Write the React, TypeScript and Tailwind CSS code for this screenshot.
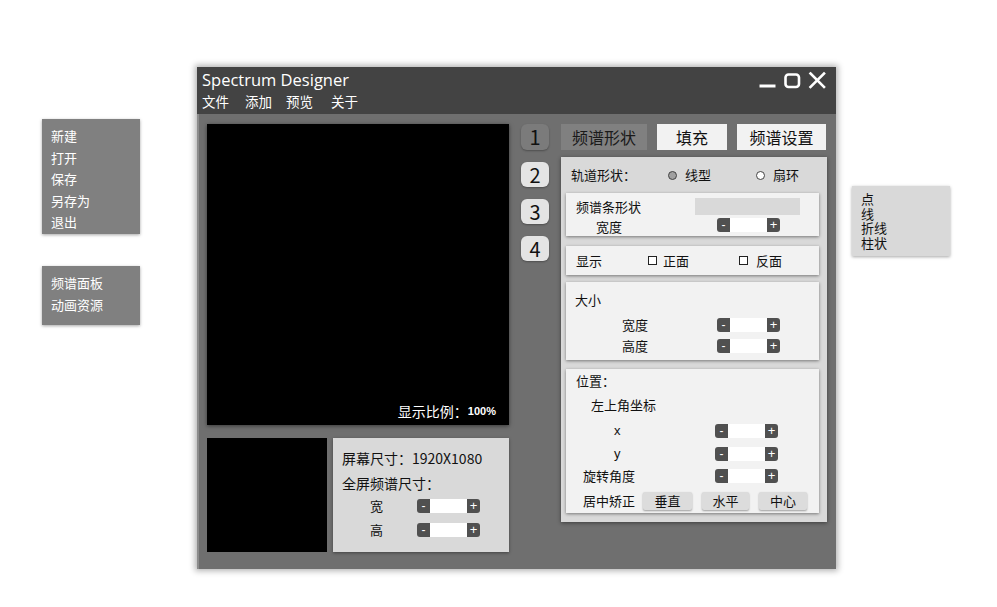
import React from "react";

const Spinner = () => (
  <div className="flex h-[14px] w-[63px]">
    <div className="flex w-[13px] items-center justify-center rounded-l-[3px] bg-[#505050] font-['Liberation_Sans',sans-serif] text-[12px] leading-[14px] text-white">-</div>
    <div className="flex-1 bg-white" />
    <div className="flex w-[13px] items-center justify-center rounded-r-[3px] bg-[#505050] font-['Liberation_Sans',sans-serif] text-[13px] leading-[14px] text-white">+</div>
  </div>
);

const Radio = ({ filled }: { filled?: boolean }) => (
  <span className={`inline-block h-[9px] w-[9px] rounded-full border-[1.5px] border-[#444] ${filled ? "bg-[#a0a0a0]" : "bg-white"}`} />
);

const Check = () => <span className="inline-block h-[9px] w-[9px] border border-[#222] bg-white" />;

const Section = ({ className, children }: { className: string; children?: React.ReactNode }) => (
  <div className={`ml-[5px] w-[253px] bg-[#f2f2f2] shadow-[0_1px_3px_rgba(0,0,0,0.45)] ${className}`}>{children}</div>
);

const SmallBtn = ({ w, label }: { w: string; label: string }) => (
  <div className={`flex h-[18px] items-center justify-center rounded-[2px] bg-[#dcdcdc] text-[13px] text-[#111] shadow-[0_1px_2px_rgba(0,0,0,0.35)] ${w}`}>{label}</div>
);

export default function App() {
  return (
    <div className="relative h-[607px] w-[997px] overflow-hidden bg-white font-['Noto_Sans_CJK_SC','Noto_Sans',sans-serif]">
      {/* left file menu */}
      <div className="absolute left-[42px] top-[119px] flex h-[115px] w-[98px] flex-col bg-[#808080] pl-[9px] pt-[6px] text-[13px] leading-[21.5px] text-white shadow-[0_1px_3px_rgba(0,0,0,0.35)]">
        <div>新建</div>
        <div>打开</div>
        <div>保存</div>
        <div>另存为</div>
        <div>退出</div>
      </div>
      <div className="absolute left-[42px] top-[266px] flex h-[59px] w-[98px] flex-col bg-[#808080] pl-[9px] pt-[6px] text-[13px] leading-[22px] text-white shadow-[0_1px_3px_rgba(0,0,0,0.35)]">
        <div>频谱面板</div>
        <div>动画资源</div>
      </div>

      {/* right shape menu */}
      <div className="absolute left-[852px] top-[186px] flex h-[70px] w-[98px] flex-col bg-[#d9d9d9] pl-[9px] pt-[6px] text-[13px] leading-[14.5px] text-[#111] shadow-[0_1px_3px_rgba(0,0,0,0.35)]">
        <div>点</div>
        <div>线</div>
        <div>折线</div>
        <div>柱状</div>
      </div>

      {/* main window */}
      <div className="absolute left-[197px] top-[67px] flex h-[502px] w-[639px] flex-col shadow-[0_0_6px_2px_rgba(0,0,0,0.3)]">
        <div className="flex h-[47px] flex-col bg-[#434343] pl-[5px] pr-[8px] text-white">
          <div className="flex items-start justify-between pt-[3px]">
            <div className="font-['Open_Sans','Noto_Sans',sans-serif] text-[16.5px] leading-[20px]">Spectrum Designer</div>
            <svg width="70" height="20" viewBox="0 0 70 20" fill="none" stroke="white" strokeLinecap="square">
              <line x1="3" y1="16" x2="16" y2="16" strokeWidth="3" />
              <rect x="27.5" y="4.5" width="13.5" height="12.5" rx="3" strokeWidth="2.6" />
              <line x1="52.5" y1="3.5" x2="66" y2="17" strokeWidth="2.6" />
              <line x1="66" y1="3.5" x2="52.5" y2="17" strokeWidth="2.6" />
            </svg>
          </div>
          <div className="mt-[3px] flex text-[13.5px] leading-[16px]">
            <span>文件</span>
            <span className="ml-[16px]">添加</span>
            <span className="ml-[14px]">预览</span>
            <span className="ml-[18px]">关于</span>
          </div>
        </div>

        <div className="flex flex-1 border-l-2 border-[#8c8c8c] bg-[#6f6f6f] pl-[8px] pt-[10px]">
          {/* left column */}
          <div className="flex w-[302px] flex-col">
            <div className="flex h-[301px] flex-col items-end justify-end bg-black pb-[5px] pr-[13px] shadow-[0_1px_4px_rgba(0,0,0,0.5)]">
              <div className="flex items-center text-white">
                <span className="text-[14px] leading-[18px]">显示比例：</span>
                <span className="text-[11px] font-bold leading-[18px] font-['Liberation_Sans',sans-serif]">100%</span>
              </div>
            </div>
            <div className="mt-[13px] flex gap-[6px]">
              <div className="h-[114px] w-[120px] bg-black" />
              <div className="flex h-[114px] w-[176px] flex-col bg-[#d9d9d9] pl-[9px] pt-[10px] text-[#111] shadow-[0_1px_3px_rgba(0,0,0,0.4)]">
                <div className="text-[14px] leading-[20px]">屏幕尺寸：1920X1080</div>
                <div className="mt-[5px] text-[14px] leading-[20px]">全屏频谱尺寸：</div>
                <div className="mt-[5px] flex items-center pl-[28px]">
                  <span className="w-[47px] text-[13px] leading-[16px]">宽</span>
                  <Spinner />
                </div>
                <div className="mt-[8px] flex items-center pl-[28px]">
                  <span className="w-[47px] text-[13px] leading-[16px]">高</span>
                  <Spinner />
                </div>
              </div>
            </div>
          </div>

          {/* step numbers */}
          <div className="ml-[12px] flex w-[28px] flex-col gap-[12px]">
            <div className="flex h-[26px] items-center justify-center rounded-[6px] bg-[#7b7b7b] text-[20px] leading-none text-[#111] shadow-[0_1px_2px_rgba(0,0,0,0.3)]">1</div>
            <div className="flex h-[25px] items-center justify-center rounded-[6px] bg-[#e4e4e4] text-[20px] leading-none text-[#111] shadow-[0_1px_2px_rgba(0,0,0,0.3)]">2</div>
            <div className="flex h-[25px] items-center justify-center rounded-[6px] bg-[#e4e4e4] text-[20px] leading-none text-[#111] shadow-[0_1px_2px_rgba(0,0,0,0.3)]">3</div>
            <div className="flex h-[25px] items-center justify-center rounded-[6px] bg-[#e4e4e4] text-[20px] leading-none text-[#111] shadow-[0_1px_2px_rgba(0,0,0,0.3)]">4</div>
          </div>

          {/* right column */}
          <div className="ml-[12px] flex w-[266px] flex-col">
            <div className="flex h-[26px] gap-[10px] text-[16px] text-[#111]">
              <div className="flex w-[86px] items-center justify-center bg-[#808080] text-[#1a1a1a]">频谱形状</div>
              <div className="flex w-[70px] items-center justify-center bg-[#f2f2f2]">填充</div>
              <div className="flex w-[89px] items-center justify-center bg-[#f2f2f2]">频谱设置</div>
            </div>

            <div className="mt-[7px] flex h-[365px] flex-col bg-[#d9d9d9] text-[13px] text-[#111] shadow-[0_1px_4px_rgba(0,0,0,0.45)]">
              <div className="mt-[7px] flex h-[22px] items-center pl-[10px]">
                <span className="w-[97px]">轨道形状：</span>
                <Radio filled />
                <span className="ml-[8px] w-[71px]">线型</span>
                <Radio />
                <span className="ml-[8px]">扇环</span>
              </div>

              <Section className="mt-[7px] flex h-[43px] flex-col">
                <div className="mt-[5px] flex h-[17px] items-center pl-[10px]">
                  <span className="w-[119px] leading-[17px]">频谱条形状</span>
                  <div className="h-[17px] w-[105px] bg-[#d9d9d9]" />
                </div>
                <div className="mt-[3px] flex h-[14px] items-center pl-[30px]">
                  <span className="w-[121px] pt-[3px] leading-[14px]">宽度</span>
                  <Spinner />
                </div>
              </Section>

              <Section className="mt-[10px] flex h-[29px] items-center pl-[10px]">
                <span className="w-[72px]">显示</span>
                <div className="flex w-[91px] items-center">
                  <Check />
                  <span className="ml-[6px]">正面</span>
                </div>
                <Check />
                <span className="ml-[8px]">反面</span>
              </Section>

              <Section className="mt-[7px] flex h-[78px] flex-col">
                <div className="mt-[9px] pl-[9px] leading-[18px]">大小</div>
                <div className="mt-[9px] flex h-[14px] items-center pl-[56px]">
                  <span className="w-[95px] leading-[14px]">宽度</span>
                  <Spinner />
                </div>
                <div className="mt-[7px] flex h-[14px] items-center pl-[56px]">
                  <span className="w-[95px] leading-[14px]">高度</span>
                  <Spinner />
                </div>
              </Section>

              <Section className="mt-[9px] flex h-[144px] flex-col">
                <div className="mt-[3px] pl-[10px] leading-[18px]">位置：</div>
                <div className="mt-[6px] pl-[25px] leading-[18px]">左上角坐标</div>
                <div className="mt-[9px] flex h-[15px] items-center pl-[48px]">
                  <span className="w-[101px] font-['Liberation_Sans',sans-serif] leading-[14px]">x</span>
                  <Spinner />
                </div>
                <div className="mt-[8px] flex h-[15px] items-center pl-[48px]">
                  <span className="w-[101px] font-['Liberation_Sans',sans-serif] leading-[14px]">y</span>
                  <Spinner />
                </div>
                <div className="mt-[7px] flex h-[15px] items-center pl-[17px]">
                  <span className="w-[132px] leading-[14px]">旋转角度</span>
                  <Spinner />
                </div>
                <div className="mt-[9px] flex h-[18px] items-center pl-[17px]">
                  <span className="w-[60px]">居中矫正</span>
                  <SmallBtn w="w-[49px]" label="垂直" />
                  <div className="w-[10px]" />
                  <SmallBtn w="w-[47px]" label="水平" />
                  <div className="w-[10px]" />
                  <SmallBtn w="w-[48px]" label="中心" />
                </div>
              </Section>
            </div>
          </div>
        </div>
      </div>
    </div>
  );
}
